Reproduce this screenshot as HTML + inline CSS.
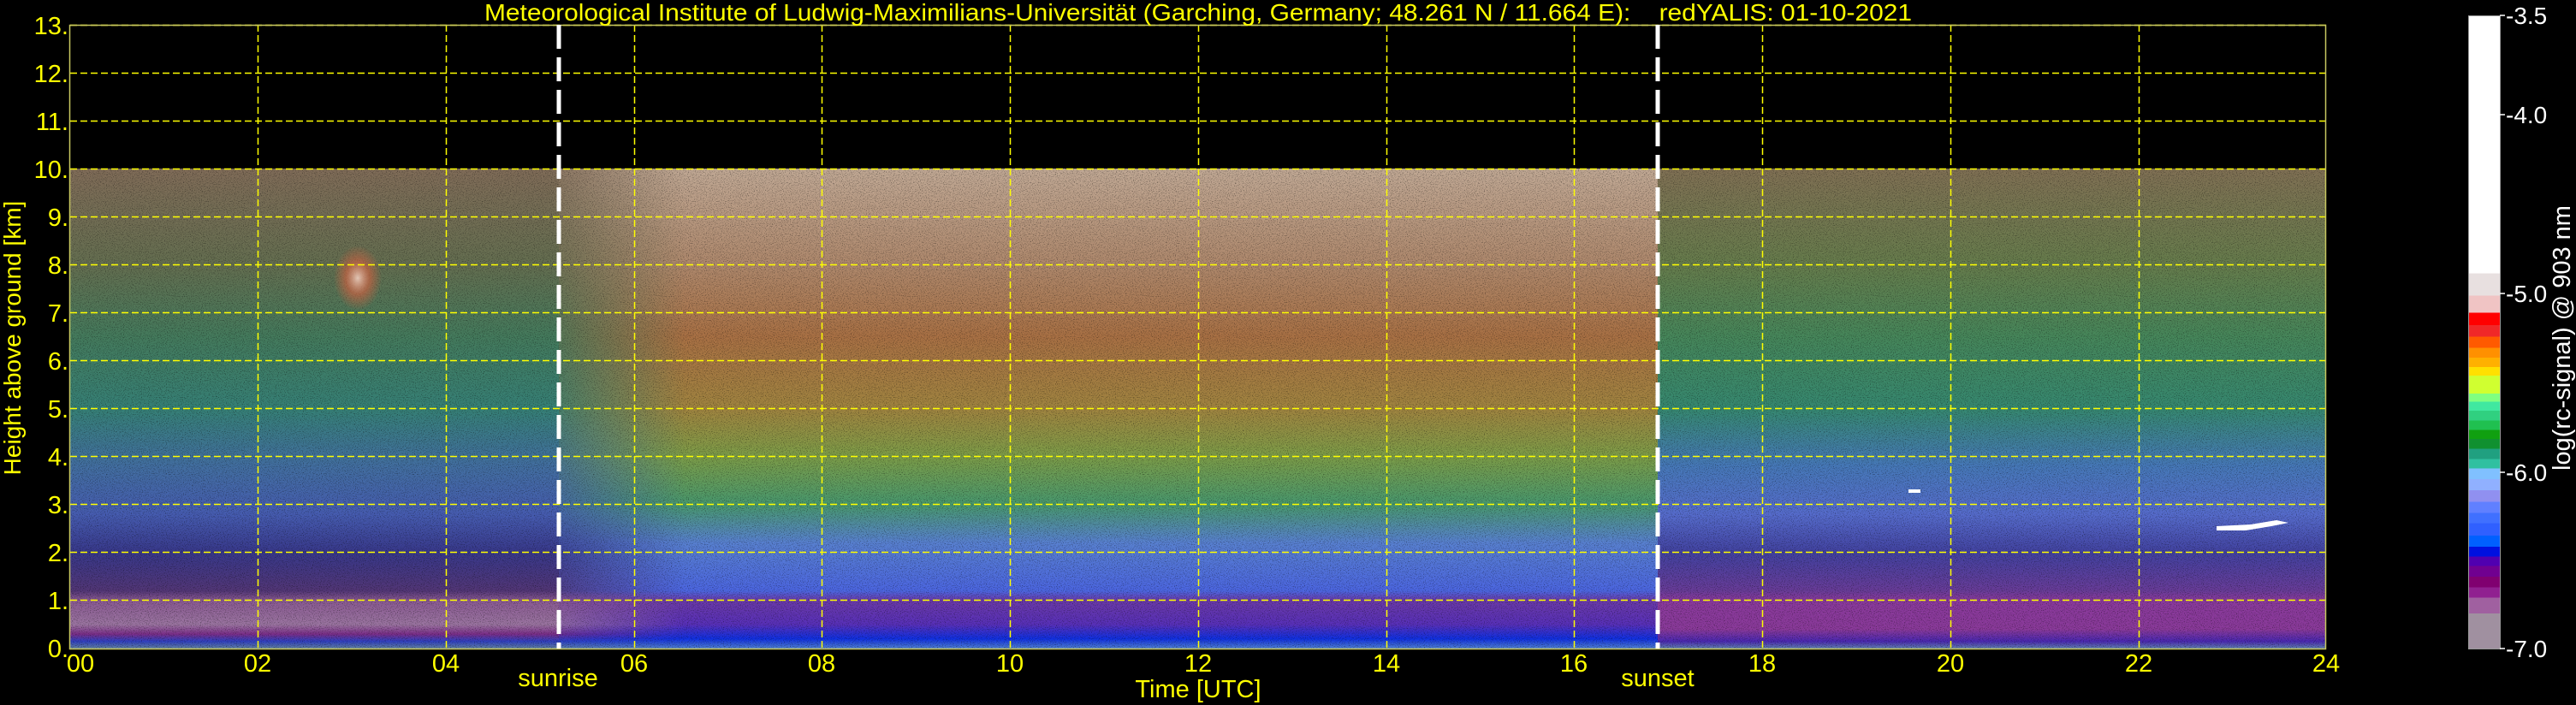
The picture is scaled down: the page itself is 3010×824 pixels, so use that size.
<!DOCTYPE html>
<html><head><meta charset="utf-8"><style>
html,body{margin:0;padding:0;background:#000;width:3010px;height:824px;overflow:hidden}
svg{display:block}
text{font-family:"Liberation Sans",sans-serif}
</style></head><body>
<svg width="3010" height="824" viewBox="0 0 3010 824" xmlns="http://www.w3.org/2000/svg">
<defs>
<linearGradient id="night" x1="0" y1="197" x2="0" y2="758" gradientUnits="userSpaceOnUse">
<stop offset="0" stop-color="#806c58"/>
<stop offset="0.2" stop-color="#646e50"/>
<stop offset="0.35" stop-color="#447a5c"/>
<stop offset="0.5" stop-color="#368076"/>
<stop offset="0.62" stop-color="#426ea0"/>
<stop offset="0.72" stop-color="#465cb0"/>
<stop offset="0.8" stop-color="#38388a"/>
<stop offset="0.88" stop-color="#523676"/>
<stop offset="0.9" stop-color="#8a5a92"/>
<stop offset="0.95" stop-color="#9a74a0"/>
<stop offset="0.97" stop-color="#7a2e88"/>
<stop offset="0.985" stop-color="#3040c0"/>
<stop offset="1" stop-color="#6080a0"/>
</linearGradient>
<linearGradient id="day" x1="0" y1="197" x2="0" y2="758" gradientUnits="userSpaceOnUse">
<stop offset="0" stop-color="#c0a894"/>
<stop offset="0.2" stop-color="#ae886c"/>
<stop offset="0.35" stop-color="#a87044"/>
<stop offset="0.5" stop-color="#a08440"/>
<stop offset="0.6" stop-color="#7c9c48"/>
<stop offset="0.7" stop-color="#48986e"/>
<stop offset="0.78" stop-color="#5880d0"/>
<stop offset="0.88" stop-color="#4c66e0"/>
<stop offset="0.9" stop-color="#6a3aa8"/>
<stop offset="0.95" stop-color="#5830b8"/>
<stop offset="0.98" stop-color="#1030e0"/>
<stop offset="1" stop-color="#5080d0"/>
</linearGradient>
<linearGradient id="eve" x1="0" y1="197" x2="0" y2="758" gradientUnits="userSpaceOnUse">
<stop offset="0" stop-color="#807054"/>
<stop offset="0.2" stop-color="#667c4c"/>
<stop offset="0.35" stop-color="#46865a"/>
<stop offset="0.5" stop-color="#368870"/>
<stop offset="0.62" stop-color="#4678b8"/>
<stop offset="0.72" stop-color="#566ccc"/>
<stop offset="0.8" stop-color="#4242a0"/>
<stop offset="0.88" stop-color="#683c98"/>
<stop offset="0.9" stop-color="#8a3a9c"/>
<stop offset="0.96" stop-color="#8a3a9a"/>
<stop offset="0.985" stop-color="#4a28b0"/>
<stop offset="1" stop-color="#6080b0"/>
</linearGradient>
<linearGradient id="fadeIn" x1="653" x2="800" y1="0" y2="0" gradientUnits="userSpaceOnUse">
<stop offset="0" stop-color="#fff" stop-opacity="0.2"/>
<stop offset="1" stop-color="#fff" stop-opacity="1"/>
</linearGradient>
<mask id="dm"><rect x="653" y="197" width="1284" height="561" fill="url(#fadeIn)"/></mask>
<filter id="grain" x="0" y="0" width="100%" height="100%">
<feTurbulence type="fractalNoise" baseFrequency="0.9" numOctaves="1" seed="3"/>
<feColorMatrix type="matrix" values="0 0 0 0 0  0 0 0 0 0  0 0 0 0 0  0 0 0 -3 1.45"/>
</filter>
<radialGradient id="cloud">
<stop offset="0" stop-color="#f0d0c0" stop-opacity="0.9"/>
<stop offset="0.5" stop-color="#d86040" stop-opacity="0.6"/>
<stop offset="1" stop-color="#d86040" stop-opacity="0"/>
</radialGradient>
<linearGradient id="cb" x1="0" y1="18" x2="0" y2="758" gradientUnits="userSpaceOnUse">
<stop offset="0" stop-color="#fff"/>
<stop offset="0.4073" stop-color="#fff"/><stop offset="0.4073" stop-color="#e8e0e0"/>
<stop offset="0.4428" stop-color="#e8e0e0"/><stop offset="0.4428" stop-color="#f0c4c4"/>
<stop offset="0.4698" stop-color="#f0c4c4"/><stop offset="0.4698" stop-color="#ff0000"/>
<stop offset="0.4889" stop-color="#ff0000"/><stop offset="0.4889" stop-color="#f02828"/>
<stop offset="0.5074" stop-color="#f02828"/><stop offset="0.5074" stop-color="#ff5a00"/>
<stop offset="0.5251" stop-color="#ff5a00"/><stop offset="0.5251" stop-color="#ff9000"/>
<stop offset="0.5408" stop-color="#ff9000"/><stop offset="0.5408" stop-color="#ffb000"/>
<stop offset="0.5557" stop-color="#ffb000"/><stop offset="0.5557" stop-color="#ffe000"/>
<stop offset="0.5692" stop-color="#ffe000"/><stop offset="0.5692" stop-color="#d0ff30"/>
<stop offset="0.5976" stop-color="#d0ff30"/><stop offset="0.5976" stop-color="#80ff80"/>
<stop offset="0.6104" stop-color="#80ff80"/><stop offset="0.6104" stop-color="#40e8a0"/>
<stop offset="0.6246" stop-color="#40e8a0"/><stop offset="0.6246" stop-color="#30d080"/>
<stop offset="0.6402" stop-color="#30d080"/><stop offset="0.6402" stop-color="#20c050"/>
<stop offset="0.6544" stop-color="#20c050"/><stop offset="0.6544" stop-color="#10a010"/>
<stop offset="0.6686" stop-color="#10a010"/><stop offset="0.6686" stop-color="#109030"/>
<stop offset="0.6843" stop-color="#109030"/><stop offset="0.6843" stop-color="#20a080"/>
<stop offset="0.7006" stop-color="#20a080"/><stop offset="0.7006" stop-color="#30c0a0"/>
<stop offset="0.7155" stop-color="#30c0a0"/><stop offset="0.7155" stop-color="#80c0ff"/>
<stop offset="0.7326" stop-color="#80c0ff"/><stop offset="0.7326" stop-color="#90b0ff"/>
<stop offset="0.7503" stop-color="#90b0ff"/><stop offset="0.7503" stop-color="#9090f0"/>
<stop offset="0.7681" stop-color="#9090f0"/><stop offset="0.7681" stop-color="#6080ff"/>
<stop offset="0.7859" stop-color="#6080ff"/><stop offset="0.7859" stop-color="#4070ff"/>
<stop offset="0.8022" stop-color="#4070ff"/><stop offset="0.8022" stop-color="#3060ff"/>
<stop offset="0.8214" stop-color="#3060ff"/><stop offset="0.8214" stop-color="#0060ff"/>
<stop offset="0.8392" stop-color="#0060ff"/><stop offset="0.8392" stop-color="#0010e0"/>
<stop offset="0.8548" stop-color="#0010e0"/><stop offset="0.8548" stop-color="#5000b0"/>
<stop offset="0.8697" stop-color="#5000b0"/><stop offset="0.8697" stop-color="#700090"/>
<stop offset="0.8867" stop-color="#700090"/><stop offset="0.8867" stop-color="#800070"/>
<stop offset="0.9031" stop-color="#800070"/><stop offset="0.9031" stop-color="#902090"/>
<stop offset="0.9194" stop-color="#902090"/><stop offset="0.9194" stop-color="#a060a0"/>
<stop offset="0.9443" stop-color="#a060a0"/><stop offset="0.9443" stop-color="#a090a0"/>
<stop offset="1" stop-color="#a090a0"/>
</linearGradient>
</defs>

<!-- data -->
<rect x="82" y="197" width="720" height="561" fill="url(#night)"/>
<rect x="1937" y="197" width="781" height="561" fill="url(#eve)"/>
<rect x="653" y="197" width="1284" height="561" fill="url(#day)" mask="url(#dm)"/>
<rect x="82" y="197" width="2636" height="561" filter="url(#grain)" opacity="0.55"/>
<!-- cloud features -->
<ellipse cx="418" cy="325" rx="28" ry="38" fill="url(#cloud)"/>
<rect x="2230" y="572" width="14" height="4" fill="#fff"/>
<path d="M2590 615 l40 -2 l30 -5 l14 3 l-20 4 l-30 5 l-34 0z" fill="#fff"/>

<!-- grid -->
<g stroke="#ffff00" stroke-width="1.5" stroke-dasharray="8,4" fill="none">
<path d="M82 29.5H2718M82 85.5H2718M82 141.5H2718M82 197.5H2718M82 253.5H2718M82 309.5H2718M82 365.5H2718M82 421.5H2718M82 477.5H2718M82 533.5H2718M82 589.5H2718M82 645.5H2718M82 701.5H2718"/>
<path d="M301.5 29V758M521.5 29V758M741.5 29V758M960.5 29V758M1180.5 29V758M1400.5 29V758M1620.5 29V758M1839.5 29V758M2059.5 29V758M2279.5 29V758M2499.5 29V758"/>
</g>
<rect x="81.5" y="29.5" width="2636" height="729" fill="none" stroke="#c8c860" stroke-width="1.5"/>
<!-- sunrise / sunset -->
<g stroke="#fff" stroke-width="5" stroke-dasharray="28,10">
<path d="M653 29V758"/><path d="M1937 29V758"/>
</g>

<!-- title -->
<text x="1400" y="24" fill="#ffff00" font-size="28" text-anchor="middle" textLength="1668" lengthAdjust="spacingAndGlyphs" xml:space="preserve">Meteorological Institute of Ludwig-Maximilians-Universität (Garching, Germany; 48.261 N / 11.664 E):    redYALIS: 01-10-2021</text>

<!-- y ticks -->
<g fill="#ffff00" font-size="29" text-anchor="end">
<text x="80" y="40">13.</text><text x="80" y="96">12.</text><text x="80" y="152">11.</text>
<text x="80" y="208">10.</text><text x="80" y="264">9.</text><text x="80" y="320">8.</text>
<text x="80" y="376">7.</text><text x="80" y="432">6.</text><text x="80" y="488">5.</text>
<text x="80" y="544">4.</text><text x="80" y="600">3.</text><text x="80" y="656">2.</text>
<text x="80" y="712">1.</text><text x="80" y="768">0.</text>
</g>
<text transform="translate(24,395) rotate(-90)" fill="#ffff00" font-size="28" text-anchor="middle">Height above ground [km]</text>

<!-- x ticks -->
<g fill="#ffff00" font-size="29" text-anchor="middle">
<text x="94" y="785">00</text><text x="301" y="785">02</text><text x="521" y="785">04</text>
<text x="741" y="785">06</text><text x="960" y="785">08</text><text x="1180" y="785">10</text>
<text x="1400" y="785">12</text><text x="1620" y="785">14</text><text x="1839" y="785">16</text>
<text x="2059" y="785">18</text><text x="2279" y="785">20</text><text x="2499" y="785">22</text>
<text x="2718" y="785">24</text>
<text x="652" y="802">sunrise</text><text x="1937" y="802">sunset</text>
<text x="1400" y="815">Time [UTC]</text>
</g>

<!-- colorbar -->
<rect x="2884" y="18" width="37" height="740" fill="url(#cb)"/>
<rect x="2884.5" y="18.5" width="37" height="740" fill="none" stroke="#999" stroke-width="1"/>
<g stroke="#fff" stroke-width="1.5"><path d="M2921 134h6M2921 343h6M2921 552h6M2921 18h6M2921 758h6"/></g>
<g fill="#fff" font-size="28">
<text x="2928" y="28">-3.5</text><text x="2928" y="144">-4.0</text><text x="2928" y="353">-5.0</text>
<text x="2928" y="562">-6.0</text><text x="2928" y="768">-7.0</text>
</g>
<text transform="translate(3003,395) rotate(-90)" fill="#fff" font-size="29" text-anchor="middle">log(rc-signal) @ 903 nm</text>
</svg>
</body></html>
